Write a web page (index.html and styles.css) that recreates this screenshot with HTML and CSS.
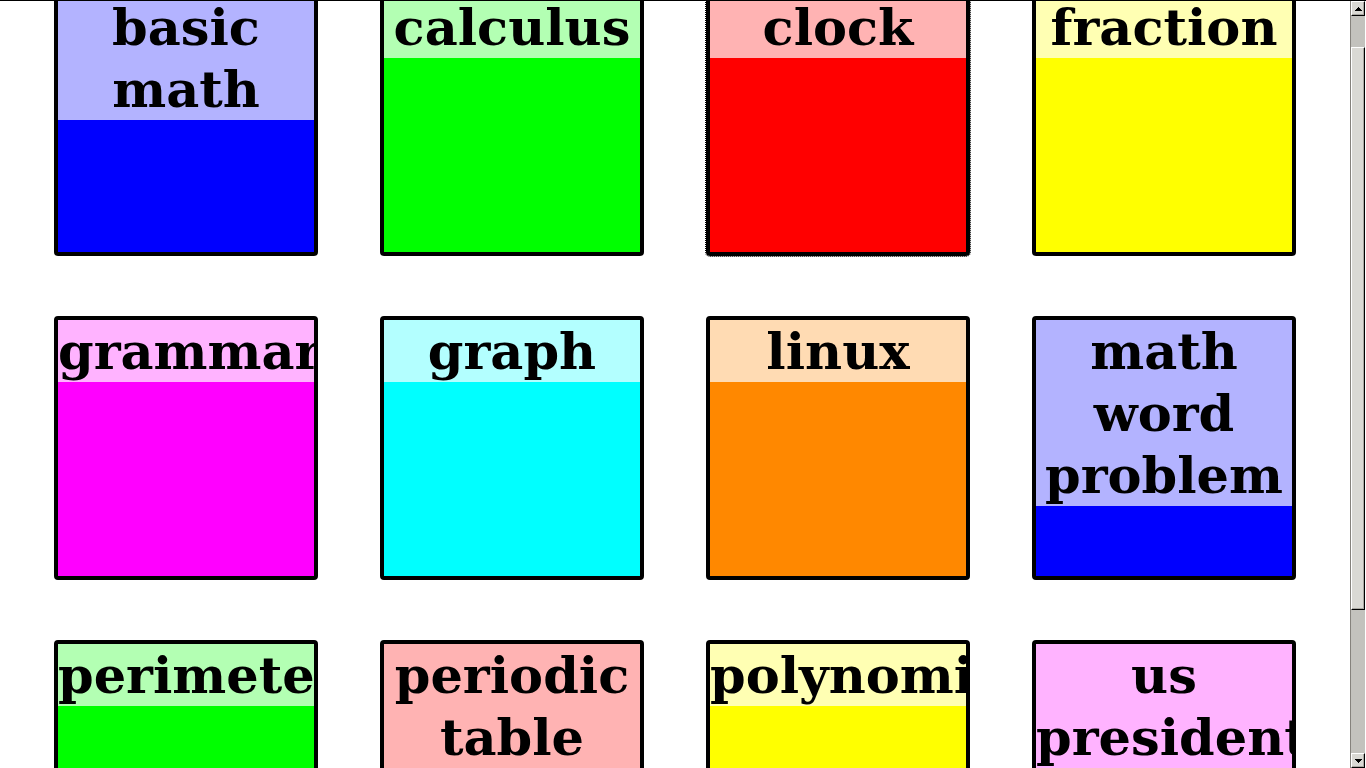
FILE: index.html
```html
<!DOCTYPE html>
<html lang="en">
<head>
<meta charset="utf-8">
<title>Topics</title>
<link rel="stylesheet" href="styles.css">
</head>
<body>
<div class="window">
  <main class="view">
    <nav class="tiles" aria-label="Topics">
      <a class="tile blue" href="#basic-math"><span class="label">basic math</span></a>
      <a class="tile green" href="#calculus"><span class="label">calculus</span></a>
      <a class="tile red selected" href="#clock"><span class="label">clock</span></a>
      <a class="tile yellow" href="#fraction"><span class="label">fraction</span></a>
      <a class="tile magenta" href="#grammar"><span class="label">grammar</span></a>
      <a class="tile cyan" href="#graph"><span class="label">graph</span></a>
      <a class="tile orange" href="#linux"><span class="label">linux</span></a>
      <a class="tile blue" href="#math-word-problem"><span class="label">math word problem</span></a>
      <a class="tile green" href="#perimeter"><span class="label">perimeter</span></a>
      <a class="tile red" href="#periodic-table"><span class="label">periodic table</span></a>
      <a class="tile yellow" href="#polynomial"><span class="label">polynomial</span></a>
      <a class="tile magenta" href="#us-president"><span class="label">us president</span></a>
    </nav>
  </main>
  <div class="scrollbar">
    <button class="arrow" type="button" aria-label="Scroll up">
      <svg width="7" height="4" viewBox="0 0 7 4" shape-rendering="crispEdges"><path d="M3 0h1v1h1v1h1v1h1v1H0V3h1V2h1V1h1z"/></svg>
    </button>
    <div class="track"><div class="thumb"></div></div>
    <button class="arrow" type="button" aria-label="Scroll down">
      <svg width="7" height="4" viewBox="0 0 7 4" shape-rendering="crispEdges"><path d="M0 0h7v1H6v1H5v1H4v1H3V3H2V2H1V1H0z"/></svg>
    </button>
  </div>
</div>
</body>
</html>
```

FILE: styles.css
```css
* {
  box-sizing: border-box;
}

body {
  margin: 0;
  background: #fff;
  color: #000;
  font-family: "DejaVu Serif", serif;
}

.window {
  display: flex;
  height: 100vh;
  border-top: 1px solid #000;
  overflow: hidden;
}

.view {
  flex: 1;
  min-width: 0;
  overflow: hidden;
}

/* The list is scrolled slightly past the top of its first row. */
.tiles {
  display: grid;
  grid-template-columns: repeat(4, 264px);
  justify-content: space-between;
  row-gap: 60px;
  margin-top: -9px;
  padding: 0 54px 60px;
}

.tile {
  height: 264px;
  border: 4px solid #000;
  border-radius: 4px;
  overflow: hidden;
  color: inherit;
  text-decoration: none;
}

.label {
  display: block;
  background: rgba(255, 255, 255, 0.7);
  font-size: 51px;
  font-weight: bold;
  line-height: 62px;
  text-align: center;
}

.selected { outline: 1px dotted #000; }

.blue { background: #00f; }
.green { background: #0f0; }
.red { background: #f00; }
.yellow { background: #ff0; }
.magenta { background: #f0f; }
.cyan { background: #0ff; }
.orange { background: #f80; }

.scrollbar {
  display: flex;
  flex-direction: column;
  width: 16px;
  padding-right: 1px;
  border-left: 1px solid #85827c;
  background: #fff;
}

.arrow,
.thumb {
  border: 1px solid;
  border-color: #fff #000 #000 #fff;
  background: #dad9d4;
  box-shadow: inset -1px -1px #aaa8a2;
}

.arrow {
  display: flex;
  align-items: center;
  justify-content: center;
  flex: none;
  height: 15px;
  padding: 0;
}

.track {
  flex: 1;
  padding-top: 31px;
  background: #c3c2bd;
}

.thumb {
  height: calc(80% - 2px);
}
```
